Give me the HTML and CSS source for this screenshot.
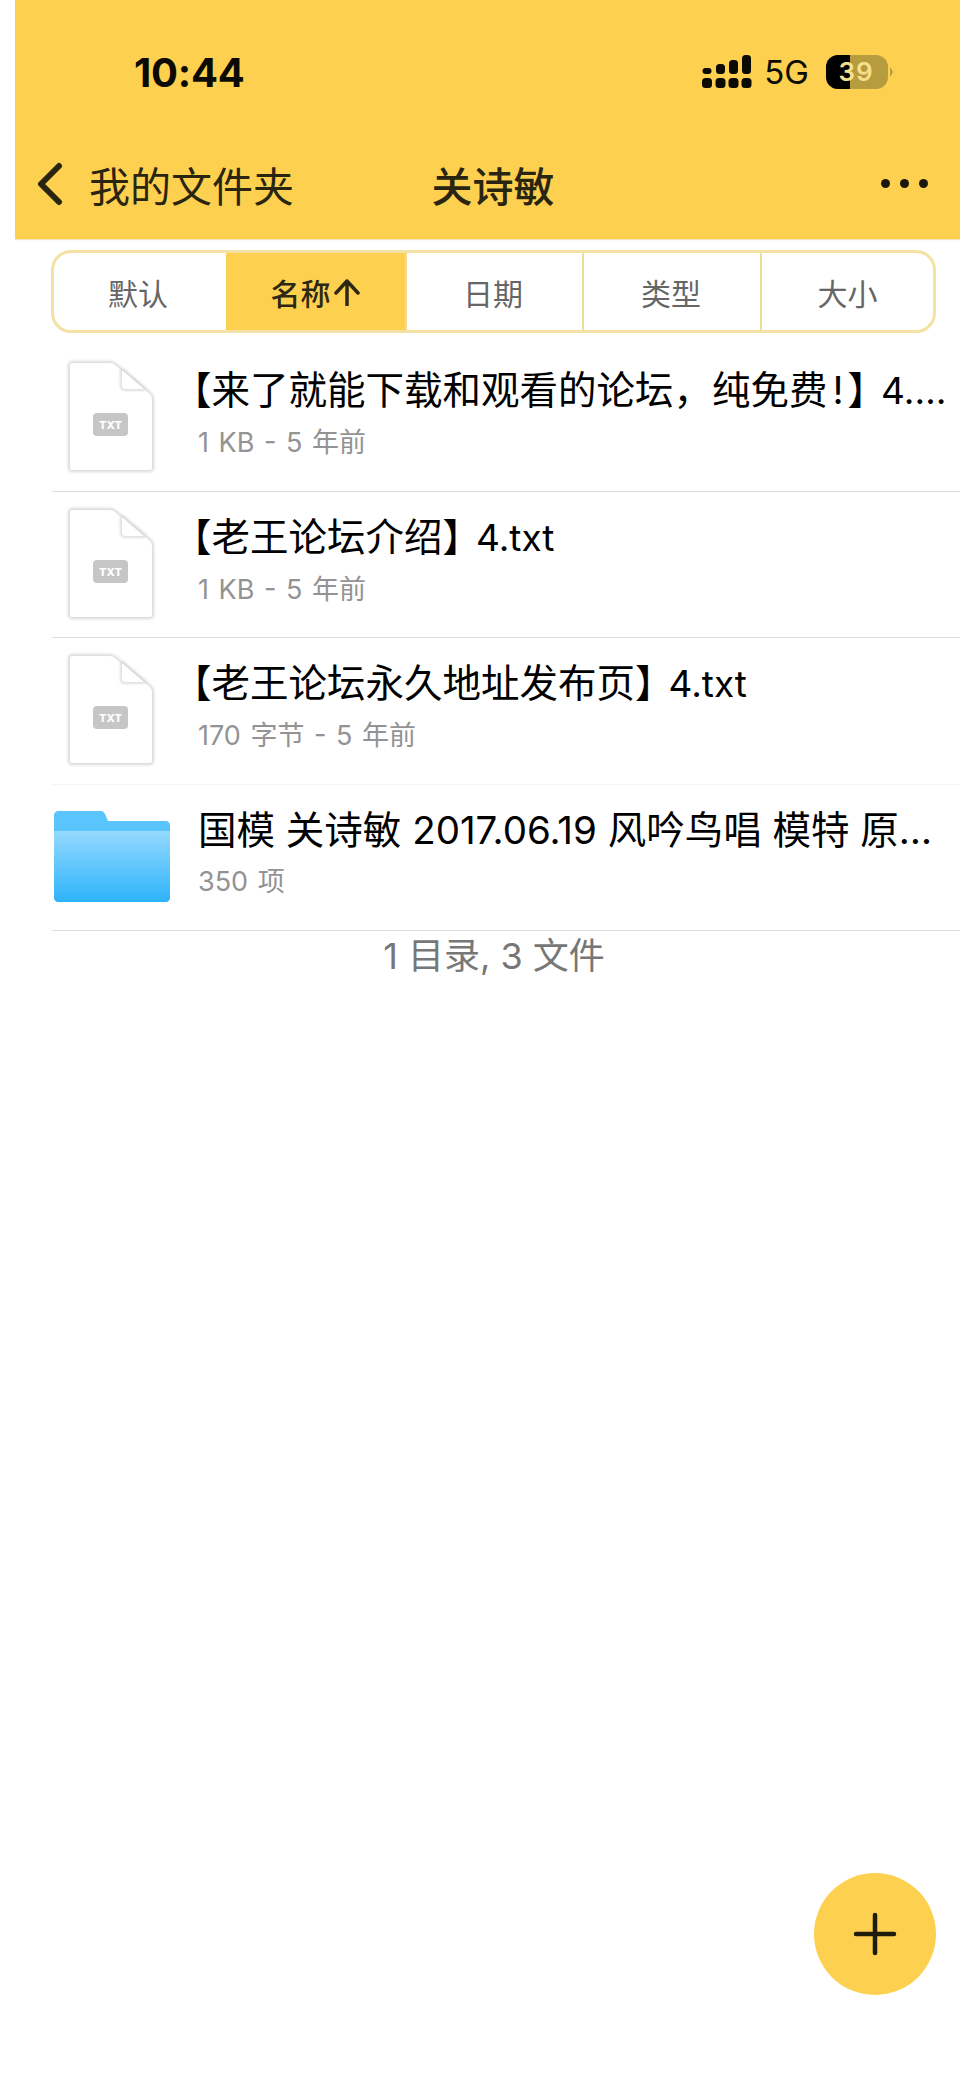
FILE: index.html
```html
<!DOCTYPE html>
<html lang="zh-CN">
<head>
<meta charset="utf-8">
<title>关诗敏</title>
<link rel="stylesheet" href="styles.css">
</head>
<body>
<header class="header">
  <div class="status">
    <span class="time">10:44</span>
    <div class="status-right">
      <svg class="signal" width="50" height="36" viewBox="0 0 50 36">
        <g fill="#0c0a04">
          <rect x="0.500" y="14" width="9" height="6" rx="3"/>
          <rect x="14" y="10" width="9" height="10" rx="3.500"/>
          <rect x="27" y="6" width="9" height="14" rx="3.500"/>
          <rect x="40" y="1" width="9" height="19" rx="3.500"/>
          <rect x="0" y="24" width="10" height="10" rx="3.500"/>
          <rect x="13.500" y="24" width="10" height="10" rx="3.500"/>
          <rect x="26.500" y="24" width="10" height="10" rx="3.500"/>
          <rect x="39.500" y="24" width="10" height="10" rx="3.500"/>
        </g>
      </svg>
      <span class="net">5G</span>
      <svg class="battery" width="68" height="36" viewBox="0 0 68 36">
        <rect x="0" y="1" width="62" height="34" rx="12" fill="#b79b3f"/>
        <path d="M12 1h12v34H12A12 12 0 0 1 0 23V13A12 12 0 0 1 12 1z" fill="#000"/>
        <path d="M64 13l3 5-3 5z" fill="#b79b3f"/>
        <text class="battery-text" x="30" y="27" text-anchor="middle">39</text>
      </svg>
    </div>
  </div>
  <nav class="nav">
    <div class="back">
      <svg class="chevron" width="26" height="44" viewBox="0 0 26 44">
        <path d="M22 4L4 22l18 18" fill="none" stroke="#2a2510" stroke-width="6" stroke-linecap="round" stroke-linejoin="round"/>
      </svg>
      <span>我的文件夹</span>
    </div>
    <div class="nav-title">关诗敏</div>
    <div class="more"><i></i><i></i><i></i></div>
  </nav>
</header>

<div class="tabs">
  <div class="tab tab-a">默认</div>
  <div class="tab tab-b active">名称<svg class="sort-arrow" width="28" height="28" viewBox="0 0 28 28"><path d="M14 3v24M3 15L14 3l11 12" fill="none" stroke="#2d2813" stroke-width="3.500" stroke-linecap="round" stroke-linejoin="round"/></svg></div>
  <div class="tab tab-c">日期</div>
  <div class="tab tab-d">类型</div>
  <div class="tab tab-e">大小</div>
</div>

<ul class="list">
  <li class="row">
    <svg class="file" width="90" height="116" viewBox="0 0 90 116">
      <use href="#page"/>
    </svg>
    <div class="text">
      <div class="title bracket">【来了就能下载和观看的论坛，纯免费<span class="bang">!</span><span class="close">】</span><span class="ext">4.…</span></div>
      <div class="sub">1 KB - 5 年前</div>
    </div>
  </li>
  <li class="row">
    <svg class="file" width="90" height="116" viewBox="0 0 90 116">
      <use href="#page"/>
    </svg>
    <div class="text">
      <div class="title bracket">【老王论坛介绍<span class="close">】</span><span class="ext">4.txt</span></div>
      <div class="sub">1 KB - 5 年前</div>
    </div>
  </li>
  <li class="row row-light">
    <svg class="file" width="90" height="116" viewBox="0 0 90 116">
      <use href="#page"/>
    </svg>
    <div class="text">
      <div class="title bracket">【老王论坛永久地址发布页<span class="close">】</span><span class="ext">4.txt</span></div>
      <div class="sub">170 字节 - 5 年前</div>
    </div>
  </li>
  <li class="row">
    <svg class="folder" width="116" height="92" viewBox="0 0 116 92">
      <defs>
        <linearGradient id="fg" x1="0" y1="0" x2="0" y2="1">
          <stop offset="0" stop-color="#95d9ff"/>
          <stop offset="1" stop-color="#2db3fa"/>
        </linearGradient>
      </defs>
      <path d="M4 0h42c3 0 4 1 5 3l3 7h58c2 0 4 2 4 4v8H0V4c0-2 2-4 4-4z" fill="#5ac5fd"/>
      <path d="M0 20h116v67c0 2-2 4-4 4H4c-2 0-4-2-4-4z" fill="url(#fg)"/>
    </svg>
    <div class="text text-folder">
      <div class="title">国模 关诗敏 2017.06.19 风吟鸟唱 模特 原…</div>
      <div class="sub">350 项</div>
    </div>
  </li>
</ul>
<div class="summary">1 目录, 3 文件</div>

<button class="fab" type="button" aria-label="新建">
  <svg width="44" height="44" viewBox="0 0 44 44">
    <path d="M22 3v38M3 22h38" stroke="#201c0c" stroke-width="4.500" stroke-linecap="round"/>
  </svg>
</button>

<svg class="defs" width="0" height="0">
  <defs>
    <filter id="ps" x="-15%" y="-15%" width="130%" height="130%">
      <feGaussianBlur stdDeviation="1.500"/>
    </filter>
    <g id="page">
      <path d="M6 5h38q3 0 5 2l35 29q2 2 2 5v69a2 2 0 0 1-2 2H6a2 2 0 0 1-2-2V7a2 2 0 0 1 2-2z" fill="none" stroke="#d4d4d4" stroke-width="3.500" filter="url(#ps)"/>
      <path d="M6 5h38q3 0 5 2l35 29q2 2 2 5v69a2 2 0 0 1-2 2H6a2 2 0 0 1-2-2V7a2 2 0 0 1 2-2z" fill="#fff"/>
      <path d="M56 12v16q0 3 3 3h19z" fill="none" stroke="#d4d4d4" stroke-width="3" stroke-linejoin="round" filter="url(#ps)"/>
      <path d="M56 12v16q0 3 3 3h19z" fill="#fff"/>
      <rect x="27" y="55" width="35" height="23" rx="4" fill="#c6c6c6"/>
      <text class="file-badge" x="44.500" y="71" text-anchor="middle">TXT</text>
    </g>
  </defs>
</svg>
</body>
</html>
```
FILE: styles.css
```css
* { box-sizing: border-box; }
html, body { margin: 0; padding: 0; background: #fff; }
body {
  position: relative;
  height: 2078px;
  overflow: hidden;
  font-family: Inter, "Noto Sans CJK SC", sans-serif;
  color: #000;
}
.header {
  margin-left: 15px;
  height: 239px;
  background: #fdd14f;
  box-shadow: 0 1px 1px #f3e6bd;
}
.status {
  height: 144px;
  display: flex;
  align-items: center;
  justify-content: space-between;
  padding-left: 119px;
  padding-right: 66px;
}
.time { font-size: 40px; font-weight: 650; letter-spacing: -.2px; color: #0c0a04; }
.status-right { display: flex; align-items: center; }
.signal { display: block; margin-right: 12px; }
.net { font-size: 33px; font-weight: 400; color: #0c0a04; margin-right: 17px; line-height: 36px; }
.battery { display: block; }
.battery-text { font-family: Inter, sans-serif; font-size: 26px; font-weight: 600; letter-spacing: 1px; fill: #f6e08c; }
.nav {
  height: 95px;
  padding-left: 22px;
  padding-bottom: 16px;
  display: grid;
  grid-template-columns: 1fr auto 1fr;
  align-items: center;
  padding-right: 11px;
  color: #2a2510;
}
.back { display: flex; align-items: center; gap: 26px; font-size: 41px; }
.chevron { display: block; }
.nav-title { font-size: 41px; font-weight: 500; }
.more { justify-self: end; display: flex; gap: 10px; margin-right: 21px; }
.more i { width: 9px; height: 9px; border-radius: 50%; background: #1c1809; display: block; }

.tabs {
  margin: 11px 24px 0 51px;
  height: 83px;
  display: flex;
  border: 3px solid #f3e2a3;
  border-radius: 20px;
  overflow: hidden;
}
.tab {
  display: flex;
  align-items: center;
  justify-content: center;
  font-size: 30px;
  color: #666;
  border-left: 2px solid #f0dc94;
}
.tab:first-child { border-left: 0; }
.tab-a { width: 172px; padding-right: 4px; }
.tab-b { width: 179px; }
.tab-c { width: 177px; padding-right: 3px; }
.tab-d { width: 178px; padding-right: 2px; }
.tab-e { flex: 1; }
.tab.active { background: #fdd14f; color: #2d2813; font-weight: 500; border-left: 0; }
.sort-arrow { display: block; margin-left: 2px; }

.list { list-style: none; margin: 12px 0 0 52px; padding: 0; }
.row {
  height: 146.500px;
  display: flex;
  align-items: flex-start;
  padding-right: 10px;
  border-bottom: 1.500px solid #dcdcdc;
}
.row-light { border-bottom-color: #f5f5f5; }
.file { flex: none; display: block; margin: 13px 0 0 14px; }
.folder { flex: none; display: block; margin: 26px 0 0 2px; }
.text { min-width: 0; flex: 1; margin-left: 42px; padding-top: 19px; }
.text-folder { margin-left: 28px; }
.title {
  font-size: 38.500px;
  line-height: 52px;
  white-space: nowrap;
}
.bracket { margin-left: -25px; }
.bang { margin: 0 4px 0 5px; }
.close { letter-spacing: -5px; }
.ext { font-size: 37px; }
.sub { font-size: 27px; word-spacing: 2px; line-height: 36px; margin-top: 8px; color: #939393; }
.file-badge { font-family: Inter, sans-serif; font-size: 11px; font-weight: 800; fill: #fff; }

.summary {
  width: 884px;
  margin-left: 52px;
  height: 50px;
  line-height: 50px;
  text-align: center;
  font-size: 36px;
  color: #777;
}
.fab {
  position: absolute;
  left: 814px;
  top: 1873px;
  width: 122px;
  height: 122px;
  padding: 0;
  border: 0;
  border-radius: 50%;
  background: #fdd14f;
  display: flex;
  align-items: center;
  justify-content: center;
}
.defs { position: absolute; }
```
